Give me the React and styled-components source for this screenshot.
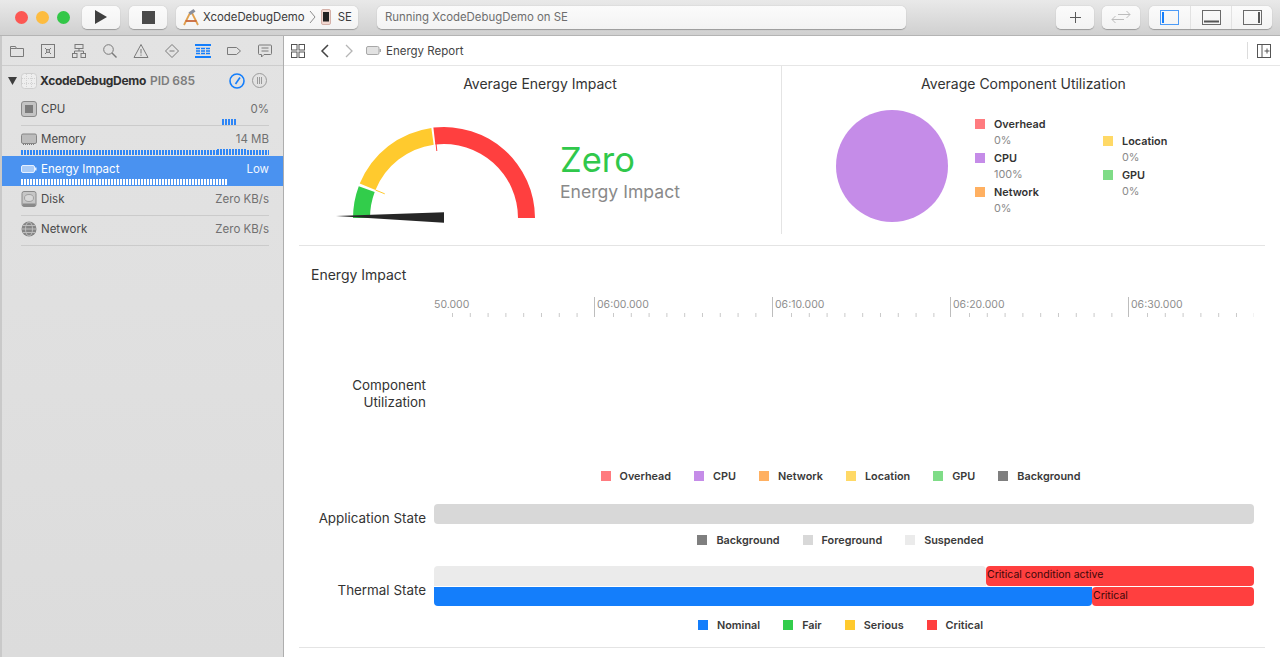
import React from "react";
import styled, { createGlobalStyle } from "styled-components";

const GlobalStyle = createGlobalStyle`
  html, body {
    margin: 0;
    height: 100%;
    overflow: hidden;
    background: #fff;
    font-family: Inter, "Liberation Sans", sans-serif;
    color: #333;
  }
`;

const Frame = styled.div`
  width: 1280px;
  height: 657px;
  display: flex;
  flex-direction: column;
  overflow: hidden;
`;

/* top toolbar */
const Toolbar = styled.div`
  height: 36px;
  flex: none;
  display: flex;
  align-items: center;
  padding: 0 8px 1px 15px;
  box-sizing: border-box;
  background: linear-gradient(#e9e9e9, #d0d0d0);
  border-bottom: 1px solid #b4b4b4;
`;
const Light = styled.span`
  width: 13px;
  height: 13px;
  border-radius: 50%;
  margin-right: 8px;
  background: ${(p) => p.$color};
`;
const ToolButton = styled.div`
  width: ${(p) => p.$w}px;
  height: 23px;
  margin-left: ${(p) => p.$ml || 0}px;
  flex: none;
  display: flex;
  align-items: center;
  justify-content: center;
  gap: ${(p) => p.$gap || 0}px;
  background: linear-gradient(#fbfbfb, #f3f3f3);
  border-radius: 5px;
  box-shadow: 0 0.5px 1px rgba(0, 0, 0, 0.28);
  font-size: 11.4px;
  color: #3c3c3c;
`;
const Scheme = styled(ToolButton)`
  justify-content: flex-start;
  padding-left: 7px;
  box-sizing: border-box;
`;
const Status = styled(ToolButton)`
  justify-content: flex-start;
  padding-left: 8px;
  box-sizing: border-box;
  color: #6e6e6e;
`;
const Nudge = styled.span`
  display: flex;
  align-items: center;
  margin-left: ${(p) => p.$ml}px;
`;
const Segmented = styled.div`
  width: 123px;
  height: 23px;
  margin-left: 9px;
  display: grid;
  grid-template-columns: repeat(3, 1fr);
  background: linear-gradient(#fbfbfb, #f3f3f3);
  border-radius: 5px;
  box-shadow: 0 0.5px 1px rgba(0, 0, 0, 0.28);
`;
const SegmentCell = styled.div`
  display: flex;
  align-items: center;
  justify-content: center;
  border-left: ${(p) => (p.$first ? "none" : "1px solid #e2e2e2")};
`;
const Spacer = styled.div`
  flex: 1;
`;

/* body */
const Body = styled.div`
  flex: 1;
  display: flex;
  min-height: 0;
`;
const Sidebar = styled.aside`
  width: 284px;
  flex: none;
  box-sizing: border-box;
  background: linear-gradient(#e3e3e3, #dcdcdc);
  border-left: 2px solid #c9c9c9;
  border-right: 1px solid #aeaeae;
`;
const NavTabs = styled.div`
  height: 29px;
  display: flex;
  align-items: center;
  gap: 11px;
  padding-left: 5px;
  border-bottom: 1px solid #cdcdcd;
`;
const NavTab = styled.span`
  width: 20px;
  height: 20px;
  display: flex;
  align-items: center;
  justify-content: center;
`;
const ProcessRow = styled.div`
  height: 30px;
  padding-bottom: 1px;
  box-sizing: border-box;
  display: flex;
  align-items: center;
  padding-left: 6px;
  font-size: 12px;
  font-weight: 700;
  color: #303030;
`;
const ProcessName = styled.span`
  margin-left: 3px;
  letter-spacing: -0.3px;
`;
const Pid = styled.span`
  margin-left: 4px;
  color: #7c7c7c;
  font-weight: 600;
  letter-spacing: -0.1px;
  flex: 1;
`;
const ProcessIcons = styled.div`
  display: flex;
  align-items: center;
  gap: 7px;
  margin-right: 16px;
`;
const GaugeRow = styled.div`
  height: 30px;
  box-sizing: border-box;
  display: flex;
  flex-direction: column;
  justify-content: flex-end;
  padding-left: 19px;
  padding-right: 14px;
  background: ${(p) => (p.$active ? "#4a92f0" : "transparent")};
  color: ${(p) => (p.$active ? "#fff" : "#4a4a4a")};
`;
const GaugeLine = styled.div`
  flex: 1;
  display: flex;
  align-items: center;
  gap: 4px;
  font-size: 11.5px;
  padding-top: 4px;
`;
const GaugeValue = styled.span`
  margin-left: auto;
  color: ${(p) => (p.$active ? "#f2f7ff" : "#707070")};
`;
const GaugeFoot = styled.div`
  height: 7px;
  display: flex;
  align-items: flex-end;
  border-bottom: 1px solid ${(p) => (p.$line ? "#cbcbcb" : "transparent")};
`;
const Spark = styled.div`
  height: ${(p) => p.$h}px;
  width: ${(p) => p.$w}px;
  margin-left: ${(p) => p.$ml || 0}px;
  background: repeating-linear-gradient(
    to right,
    ${(p) => p.$color} 0 2px,
    transparent 2px 3px
  );
`;

/* main panel */
const Main = styled.main`
  flex: 1;
  min-width: 0;
  background: #fff;
  display: flex;
  flex-direction: column;
`;
const PathBar = styled.div`
  height: 29px;
  flex: none;
  display: flex;
  align-items: center;
  padding: 0 9px 0 7px;
  border-bottom: 1px solid #e6e6e6;
  font-size: 11.5px;
  color: #444;
`;
const PathIcons = styled.div`
  display: flex;
  align-items: center;
  gap: 14px;
  margin-right: 5px;
`;
const PathEnd = styled.div`
  margin-left: auto;
  display: flex;
  align-items: center;
  padding-left: 9px;
  height: 17px;
  border-left: 1px solid #dcdcdc;
`;
const Content = styled.div`
  flex: 1;
  padding: 0 15px;
`;
const Summary = styled.section`
  height: 179px;
  display: grid;
  grid-template-columns: 483px 1fr;
  border-bottom: 1px solid #e4e4e4;
`;
const SummaryPanel = styled.div`
  height: 168px;
  border-right: ${(p) => (p.$divider ? "1px solid #e4e4e4" : "none")};
`;
const PanelTitle = styled.h2`
  margin: 8px 0 0;
  height: 20px;
  font-size: 14px;
  line-height: 20px;
  font-weight: 400;
  text-align: center;
  color: #333;
`;
const GaugeBody = styled.div`
  display: flex;
  padding: 16px 0 0 31px;
  gap: 20px;
`;
const ImpactText = styled.div`
  margin-top: 30px;
`;
const ImpactValue = styled.div`
  font-size: 34.5px;
  line-height: 40px;
  color: #30c84b;
`;
const ImpactLabel = styled.div`
  font-size: 17.6px;
  line-height: 24px;
  color: #8a8a8a;
`;
const PieBody = styled.div`
  display: flex;
  padding: 16px 0 0 54px;
  gap: 27px;
`;
const PieLegend = styled.div`
  display: flex;
  flex-direction: column;
  width: 101px;
  margin-top: ${(p) => p.$mt || 6}px;
`;
const PieItem = styled.div`
  height: 34px;
  display: grid;
  grid-template-columns: 10px 1fr;
  grid-template-rows: 16px 16px;
  column-gap: 9px;
  align-items: center;
  font-size: 10.85px;
  font-weight: 600;
  color: #333;
`;
const PieValue = styled.span`
  grid-column: 2;
  font-weight: 400;
  color: #8a8a8a;
`;
const Swatch = styled.span`
  width: 10px;
  height: 10px;
  background: ${(p) => p.$color};
`;

const Timeline = styled.section`
  display: grid;
  grid-template-columns: 127px 820px;
  column-gap: 8px;
`;
const SectionTitle = styled.h3`
  grid-column: 1 / -1;
  margin: 19px 0 0 12px;
  height: 32px;
  font-size: 14px;
  line-height: 20px;
  font-weight: 400;
  color: #333;
`;
const RowLabel = styled.div`
  grid-column: 1;
  font-size: 13.4px;
  line-height: 17px;
  text-align: right;
  color: #333;
  align-self: start;
  margin-top: ${(p) => p.$mt}px;
  margin-bottom: -10px;
`;
const Ruler = styled.div`
  grid-column: 2;
  height: 20px;
  display: flex;
`;
const RulerSegment = styled.div`
  width: ${(p) => p.$w}px;
  flex: none;
  display: flex;
  flex-direction: column;
  justify-content: space-between;
  box-sizing: border-box;
  border-left: ${(p) => (p.$first ? "none" : "1px solid #bdbdbd")};
  font-size: 10.5px;
  line-height: 16px;
  color: #8e8e8e;
  padding-left: ${(p) => (p.$first ? 0 : 2)}px;
`;
const RulerTicks = styled.div`
  height: 4px;
  margin-left: ${(p) => (p.$first ? 17.8 : 15.8)}px;
  background: linear-gradient(to right, #c9c9c9 1px, transparent 1px) 0 0 / 17.8px 4px repeat-x;
`;
const ChartGap = styled.div`
  grid-column: 2;
  height: 149px;
`;
const Legend = styled.div`
  grid-column: 2;
  display: flex;
  justify-content: center;
  align-items: center;
  gap: 23px;
  padding-right: 7px;
  height: ${(p) => p.$h}px;
  padding-bottom: ${(p) => p.$pb || 0}px;
`;
const LegendItem = styled.div`
  display: flex;
  align-items: center;
  gap: 9px;
  font-size: 10.85px;
  font-weight: 600;
  color: #3a3a3a;
`;
const Lane = styled.div`
  display: flex;
  height: ${(p) => p.$h || 20}px;
  margin-top: ${(p) => p.$mt || 0}px;
`;
const LaneBlock = styled.div`
  width: ${(p) => p.$w}px;
  flex: none;
  box-sizing: border-box;
  background: ${(p) => p.$color};
  border-radius: ${(p) => p.$radius};
  font-size: 10.5px;
  line-height: 18px;
  color: #3d0808;
  padding-left: 1px;
  white-space: nowrap;
`;
const LaneStack = styled.div`
  grid-column: 2;
`;
const BottomRule = styled.div`
  height: 1px;
  margin-top: 3px;
  background: #e4e4e4;
`;

const Icon = ({ w = 16, h = 16, vb, children, stroke = "#7a7a7a", sw = 1 }) => (
  <svg width={w} height={h} viewBox={vb || `0 0 ${w} ${h}`} fill="none" stroke={stroke} strokeWidth={sw}>
    {children}
  </svg>
);

const navIcons = [
  <Icon key="folder"><path d="M1.5 3.5h5l1 2h7v8h-13z" /><path d="M1.5 5.5h6" /></Icon>,
  <Icon key="source"><rect x="1.5" y="1.5" width="13" height="13" /><path d="M5 5l2 2M11 5L9 7M5 11l2-2M11 11L9 9" /><circle cx="8" cy="8" r="1.5" /></Icon>,
  <Icon key="hierarchy"><rect x="4" y="1.5" width="8" height="4" /><rect x="1.5" y="10.5" width="4.5" height="4" /><rect x="10" y="10.5" width="4.5" height="4" /><path d="M8 5.5V8M3.5 10.5V8h9v2.5" /></Icon>,
  <Icon key="search"><circle cx="6.5" cy="6.5" r="4.8" /><path d="M10 10l4.5 4.5" strokeWidth="1.4" /></Icon>,
  <Icon key="issue"><path d="M8 1.5l7 13H1z" /><path d="M8 6v4.5M8 11.5v1.3" /></Icon>,
  <Icon key="test"><path d="M8 1.5L14.5 8 8 14.5 1.5 8z" strokeLinejoin="round" /><path d="M5.5 8h5" /></Icon>,
  <Icon key="debug" w={18} h={16} stroke="#147efb"><path d="M1 2h16M1 14h16" strokeWidth="2" /><path d="M2 5.5h14M2 8h14M2 10.5h14" strokeWidth="1.6" /><path d="M6.5 4.5v7M11.5 4.5v7" stroke="#e0e0e0" /></Icon>,
  <Icon key="breakpoint"><path d="M1.5 4.5h9l4 3.5-4 3.5h-9z" strokeLinejoin="round" /></Icon>,
  <Icon key="report"><path d="M2.5 2h11a1 1 0 0 1 1 1v7.5a1 1 0 0 1-1 1H7l-2.5 2.5v-2.5h-2a1 1 0 0 1-1-1V3a1 1 0 0 1 1-1z" /><path d="M4.5 5h7M4.5 8h7" /></Icon>,
];

const polar = (r, deg) => {
  const a = (deg * Math.PI) / 180;
  return [114 + r * Math.cos(a), 108 - r * Math.sin(a)];
};
const arcPath = (from, to) => {
  const R = 91;
  const r = 74;
  const [x1, y1] = polar(R, from);
  const [x2, y2] = polar(R, to);
  const [x3, y3] = polar(r, to);
  const [x4, y4] = polar(r, from);
  return `M${x1} ${y1}A${R} ${R} 0 0 1 ${x2} ${y2}L${x3} ${y3}A${r} ${r} 0 0 0 ${x4} ${y4}Z`;
};
const [tickX1, tickY1] = polar(74, 157.8);
const [tickX2, tickY2] = polar(64, 157.8);

const EnergyGauge = () => (
  <svg width="210" height="120" viewBox="0 0 210 120">
    <path d={arcPath(180, 159.5)} fill="#32cd4b" />
    <path d={arcPath(157.8, 98)} fill="#ffca2e" />
    <path d={arcPath(96.7, 0)} fill="#ff3f3f" />
    <path d={`M${tickX1} ${tickY1}L${tickX2} ${tickY2}`} stroke="#ffca2e" />
    <path d="M106 33l.8 8" stroke="#ff3f3f" />
    <path d="M6 106L114 102.3V112.7z" fill="#262626" />
  </svg>
);

const Pie = () => (
  <svg width="112" height="112" viewBox="0 0 112 112">
    <circle cx="56" cy="56" r="56" fill="#c58ce8" />
  </svg>
);

const pieLeft = [
  ["Overhead", "0%", "#ff7b7f"],
  ["CPU", "100%", "#c58ce8"],
  ["Network", "0%", "#ffb061"],
];
const pieRight = [
  ["Location", "0%", "#ffd966"],
  ["GPU", "0%", "#7fdc87"],
];
const utilLegend = [
  ["Overhead", "#ff7b7f"],
  ["CPU", "#c58ce8"],
  ["Network", "#ffb061"],
  ["Location", "#ffd966"],
  ["GPU", "#7fdc87"],
  ["Background", "#7f7f7f"],
];
const appLegend = [
  ["Background", "#7f7f7f"],
  ["Foreground", "#d8d8d8"],
  ["Suspended", "#ebebeb"],
];
const thermalLegend = [
  ["Nominal", "#147efb"],
  ["Fair", "#32cd4b"],
  ["Serious", "#ffca2e"],
  ["Critical", "#ff3f3f"],
];
const ruler = [
  ["50.000", 160, true],
  ["06:00.000", 178],
  ["06:10.000", 178],
  ["06:20.000", 178],
  ["06:30.000", 126],
];

const LegendRow = ({ items, h, pb }) => (
  <Legend $h={h} $pb={pb}>
    {items.map(([name, color]) => (
      <LegendItem key={name}>
        <Swatch $color={color} />
        {name}
      </LegendItem>
    ))}
  </Legend>
);

const PieColumn = ({ items, mt }) => (
  <PieLegend $mt={mt}>
    {items.map(([name, value, color]) => (
      <PieItem key={name}>
        <Swatch $color={color} />
        <span>{name}</span>
        <PieValue>{value}</PieValue>
      </PieItem>
    ))}
  </PieLegend>
);

const sidebarRows = [
  {
    name: "CPU",
    value: "0%",
    line: true,
    sparks: [{ w: 15, ml: 201, h: 6, color: "#2f86f6" }],
    icon: <svg width="16" height="16" viewBox="0 0 16 16"><rect x="0.5" y="0.5" width="15" height="15" rx="2.5" fill="#c4c4c4" stroke="#8a8a8a" /><rect x="4" y="4" width="8" height="8" fill="#7c7c7c" /></svg>,
  },
  {
    name: "Memory",
    value: "14 MB",
    sparks: [
      { w: 198, h: 5, color: "#2f86f6" },
      { w: 30, h: 6, color: "#2f86f6" },
      { w: 22, h: 5, color: "#2f86f6" },
    ],
    icon: <svg width="16" height="16" viewBox="0 0 16 16"><rect x="0.5" y="3" width="15" height="9.5" rx="1.5" fill="#bcbcbc" stroke="#858585" /><path d="M2 13.5h12" stroke="#777" strokeDasharray="1 1" /></svg>,
  },
  {
    name: "Energy Impact",
    value: "Low",
    active: true,
    sparks: [{ w: 207, h: 6, color: "#fff" }],
    icon: <svg width="16" height="16" viewBox="0 0 16 16"><rect x="0.5" y="4.5" width="13" height="7" rx="1.5" fill="#a9cbf7" stroke="#e6f0ff" /><rect x="14" y="6.5" width="1.5" height="3" fill="#e6f0ff" /></svg>,
  },
  {
    name: "Disk",
    value: "Zero KB/s",
    line: true,
    sparks: [],
    icon: <svg width="16" height="16" viewBox="0 0 16 16"><rect x="1" y="0.5" width="14" height="15" rx="2" fill="#c6c6c6" stroke="#8a8a8a" /><ellipse cx="8" cy="7" rx="4.5" ry="3.5" fill="#d8d8d8" stroke="#a0a0a0" /><rect x="1.5" y="12.5" width="13" height="2.5" fill="#8a8a8a" /></svg>,
  },
  {
    name: "Network",
    value: "Zero KB/s",
    line: true,
    sparks: [],
    icon: <svg width="16" height="16" viewBox="0 0 16 16"><circle cx="8" cy="8" r="7.5" fill="#858585" /><ellipse cx="8" cy="8" rx="3.5" ry="7" fill="none" stroke="#bdbdbd" /><path d="M1 8h14M2 4.5h12M2 11.5h12" stroke="#bdbdbd" /></svg>,
  },
];

const App = () => (
  <Frame>
    <GlobalStyle />
    <Toolbar>
      <Light $color="#fc5753" />
      <Light $color="#fdbc40" />
      <Light $color="#33c748" />
      <ToolButton $w={38} $ml={4}>
        <svg width="14" height="16" viewBox="0 0 14 16"><path d="M1 1l12 7-12 7z" fill="#3f3f3f" /></svg>
      </ToolButton>
      <ToolButton $w={38} $ml={9}>
        <svg width="13" height="13" viewBox="0 0 13 13"><rect width="13" height="13" fill="#4a4a4a" /></svg>
      </ToolButton>
      <Scheme $w={182} $ml={9} $gap={4}>
        <svg width="16" height="18" viewBox="0 0 16 18">
          <path d="M1 17L7 5M15 17L9 5" fill="none" stroke="#e0a04e" strokeWidth="1.8" />
          <path d="M2.5 13h11" stroke="#c9683a" strokeWidth="1.8" />
          <path d="M5.5 4.5L10.5 1l2 2.5-5 3.5z" fill="#8a8f9c" />
        </svg>
        XcodeDebugDemo
        <svg width="7" height="14" viewBox="0 0 7 14" fill="none" stroke="#8c8c8c"><path d="M1 1l5 6-5 6" /></svg>
        <Nudge $ml={1}>
          <svg width="10" height="16" viewBox="0 0 10 16">
            <rect x="0.5" y="0.5" width="9" height="15" rx="1.5" fill="#f2d8d0" stroke="#d4b0a8" />
            <rect x="2" y="3" width="6" height="9.5" fill="#222" />
          </svg>
        </Nudge>
        <Nudge $ml={3}>SE</Nudge>
      </Scheme>
      <Status $w={529} $ml={19}>Running XcodeDebugDemo on SE</Status>
      <Spacer />
      <ToolButton $w={38}>
        <svg width="13" height="13" viewBox="0 0 13 13" stroke="#5a5a5a"><path d="M6.5 1v11M1 6.5h11" /></svg>
      </ToolButton>
      <ToolButton $w={38} $ml={8}>
        <svg width="20" height="14" viewBox="0 0 20 14" fill="none" stroke="#bdbdbd"><path d="M7 4.5h12M15.5 1L19 4.5 15.5 8M13 9.5H1M4.5 6L1 9.5 4.5 13" /></svg>
      </ToolButton>
      <Segmented>
        <SegmentCell $first>
          <svg width="19" height="15" viewBox="0 0 19 15"><rect x="0.5" y="0.5" width="18" height="14" fill="none" stroke="#4d9bf7" /><rect x="2" y="2" width="2" height="11" fill="#147efb" /></svg>
        </SegmentCell>
        <SegmentCell>
          <svg width="19" height="15" viewBox="0 0 19 15"><rect x="0.5" y="0.5" width="18" height="14" fill="none" stroke="#6a6a6a" /><rect x="2" y="10.5" width="15" height="2" fill="#555" /></svg>
        </SegmentCell>
        <SegmentCell>
          <svg width="19" height="15" viewBox="0 0 19 15"><rect x="0.5" y="0.5" width="18" height="14" fill="none" stroke="#6a6a6a" /><rect x="15" y="2" width="2" height="11" fill="#555" /></svg>
        </SegmentCell>
      </Segmented>
    </Toolbar>
    <Body>
      <Sidebar>
        <NavTabs>
          {navIcons.map((icon) => (
            <NavTab key={icon.key}>{icon}</NavTab>
          ))}
        </NavTabs>
        <ProcessRow>
          <svg width="9" height="8" viewBox="0 0 9 8"><path d="M0 0h9L4.5 8z" fill="#3e3e3e" /></svg>
          <Nudge $ml={4}>
            <svg width="16" height="16" viewBox="0 0 16 16">
              <rect x="0.5" y="0.5" width="15" height="15" rx="3" fill="#eeeeee" stroke="#cfcfcf" />
              <path d="M5.5 1v14M10.5 1v14M1 5.5h14M1 10.5h14" stroke="#d2d2d2" strokeDasharray="1 1" />
            </svg>
          </Nudge>
          <ProcessName>XcodeDebugDemo</ProcessName>
          <Pid>PID 685</Pid>
          <ProcessIcons>
            <svg width="16" height="16" viewBox="0 0 16 16" fill="none"><circle cx="8" cy="8" r="7" stroke="#147efb" strokeWidth="1.6" /><path d="M11 4.5L6.5 11" stroke="#147efb" strokeWidth="1.6" /></svg>
            <svg width="15" height="15" viewBox="0 0 15 15" fill="none" stroke="#9a9a9a"><circle cx="7.5" cy="7.5" r="7" /><path d="M5.5 4v7M7.5 4v7M9.5 4v7" /></svg>
          </ProcessIcons>
        </ProcessRow>
        {sidebarRows.map((row) => (
          <GaugeRow key={row.name} $active={row.active}>
            <GaugeLine>
              {row.icon}
              {row.name}
              <GaugeValue $active={row.active}>{row.value}</GaugeValue>
            </GaugeLine>
            <GaugeFoot $line={row.line}>
              {row.sparks.map((s, i) => (
                <Spark key={i} $w={s.w} $ml={s.ml} $h={s.h} $color={s.color} />
              ))}
            </GaugeFoot>
          </GaugeRow>
        ))}
      </Sidebar>
      <Main>
        <PathBar>
          <PathIcons>
            <svg width="14" height="14" viewBox="0 0 14 14" fill="none" stroke="#555"><rect x="0.5" y="0.5" width="5.5" height="5.5" /><rect x="8" y="0.5" width="5.5" height="5.5" /><rect x="0.5" y="8" width="5.5" height="5.5" /><rect x="8" y="8" width="5.5" height="5.5" /></svg>
            <Nudge $ml={1}>
              <svg width="10" height="14" viewBox="0 0 10 14" fill="none" stroke="#444" strokeWidth="1.5"><path d="M8 1L2 7l6 6" /></svg>
            </Nudge>
            <svg width="10" height="14" viewBox="0 0 10 14" fill="none" stroke="#b5b5b5" strokeWidth="1.3"><path d="M2 1l6 6-6 6" /></svg>
            <Nudge $ml={-2}>
              <svg width="15" height="9" viewBox="0 0 15 9"><rect x="0.5" y="0.5" width="12.5" height="8" rx="1.5" fill="#e2e2e2" stroke="#a8a8a8" /><rect x="13.5" y="3" width="1.5" height="3" fill="#a8a8a8" /></svg>
            </Nudge>
          </PathIcons>
          Energy Report
          <PathEnd>
            <svg width="14" height="14" viewBox="0 0 14 14" fill="none" stroke="#555"><rect x="0.5" y="0.5" width="13" height="13" /><path d="M5 0.5v13M7.5 7h5M10 4.5v5" /></svg>
          </PathEnd>
        </PathBar>
        <Content>
          <Summary>
            <SummaryPanel $divider>
              <PanelTitle>Average Energy Impact</PanelTitle>
              <GaugeBody>
                <EnergyGauge />
                <ImpactText>
                  <ImpactValue>Zero</ImpactValue>
                  <ImpactLabel>Energy Impact</ImpactLabel>
                </ImpactText>
              </GaugeBody>
            </SummaryPanel>
            <SummaryPanel>
              <PanelTitle>Average Component Utilization</PanelTitle>
              <PieBody>
                <Pie />
                <PieColumn items={pieLeft} />
                <PieColumn items={pieRight} mt={23} />
              </PieBody>
            </SummaryPanel>
          </Summary>
          <Timeline>
            <SectionTitle>Energy Impact</SectionTitle>
            <Ruler>
              {ruler.map(([label, w, first]) => (
                <RulerSegment key={label} $w={w} $first={first}>
                  {label}
                  <RulerTicks $first={first} />
                </RulerSegment>
              ))}
            </Ruler>
            <RowLabel $mt={59.5}>
              Component
              <br />
              Utilization
            </RowLabel>
            <ChartGap />
            <LegendRow items={utilLegend} h={20} pb={18} />
            <RowLabel $mt={5.5}>Application State</RowLabel>
            <LaneStack>
              <Lane>
                <LaneBlock $w={820} $color="#d8d8d8" $radius="4px" />
              </Lane>
            </LaneStack>
            <LegendRow items={appLegend} h={32} pb={10} />
            <RowLabel $mt={15.5}>Thermal State</RowLabel>
            <LaneStack>
              <Lane>
                <LaneBlock $w={552} $color="#ebebeb" $radius="4px 4px 0 0" />
                <LaneBlock $w={268} $color="#ff3f3f" $radius="4px">Critical condition active</LaneBlock>
              </Lane>
              <Lane $mt={1} $h={19}>
                <LaneBlock $w={658} $color="#147efb" $radius="0 0 4px 4px" />
                <LaneBlock $w={162} $color="#ff3f3f" $radius="4px">Critical</LaneBlock>
              </Lane>
            </LaneStack>
            <LegendRow items={thermalLegend} h={38} />
          </Timeline>
          <BottomRule />
        </Content>
      </Main>
    </Body>
  </Frame>
);

export default App;
